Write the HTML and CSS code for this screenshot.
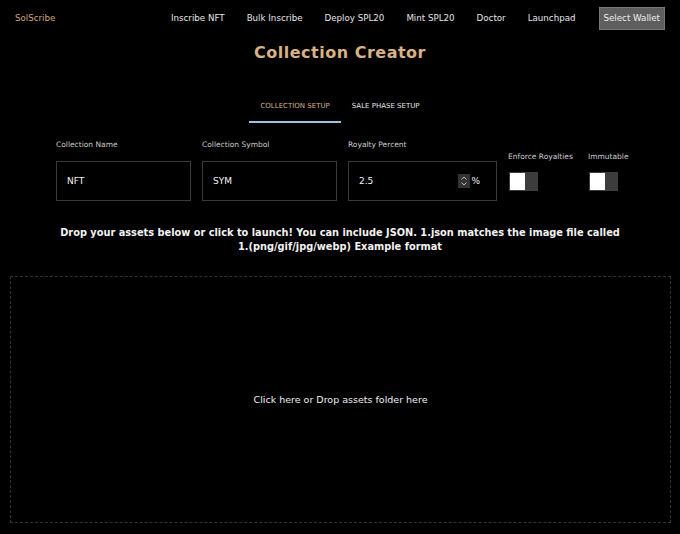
FILE: index.html
```html
<!DOCTYPE html>
<html lang="en">
<head>
    <meta charset="UTF-8">
    <title>SolScribe - Collection Creator</title>
    <link rel="stylesheet" href="styles.css">
</head>
<body>
    <header class="topbar">
        <div class="brand">SolScribe</div>
        <nav class="nav-links">
            <a href="#">Inscribe NFT</a>
            <a href="#">Bulk Inscribe</a>
            <a href="#">Deploy SPL20</a>
            <a href="#">Mint SPL20</a>
            <a href="#">Doctor</a>
            <a href="#">Launchpad</a>
        </nav>
        <button class="wallet-button">Select Wallet</button>
    </header>

    <main>
        <h1 class="page-title">Collection Creator</h1>

        <div class="tabs">
            <div class="tab active">COLLECTION SETUP</div>
            <div class="tab">SALE PHASE SETUP</div>
        </div>

        <div class="form-row">
            <div class="field">
                <label>Collection Name</label>
                <div class="text-box">NFT</div>
            </div>
            <div class="field">
                <label>Collection Symbol</label>
                <div class="text-box">SYM</div>
            </div>
            <div class="field">
                <label>Royalty Percent</label>
                <div class="text-box royalty">
                    <span>2.5</span>
                    <span class="suffix">
                        <span class="spinner">
                            <svg width="8" height="12" viewBox="0 0 8 12">
                                <path d="M1.5 4.5 L4 2 L6.5 4.5 M1.5 7.5 L4 10 L6.5 7.5" fill="none" stroke="#bbb" stroke-width="1"/>
                            </svg>
                        </span>%
                    </span>
                </div>
            </div>
            <div class="field toggle-field enforce">
                <label>Enforce Royalties</label>
                <div class="toggle"><span class="knob"></span></div>
            </div>
            <div class="field toggle-field">
                <label>Immutable</label>
                <div class="toggle"><span class="knob"></span></div>
            </div>
        </div>

        <p class="drop-info">Drop your assets below or click to launch! You can include JSON. 1.json matches the image file called <span class="nowrap">1.(png/gif/jpg/webp)</span> Example format</p>

        <div class="dropzone">Click here or Drop assets folder here</div>
    </main>
</body>
</html>
```

FILE: styles.css
```css
body {
    margin: 0;
    padding: 0;
    background-color: #000;
    color: #e6e6e6;
    font-family: "DejaVu Sans", "Liberation Sans", sans-serif;
}

.topbar {
    display: flex;
    align-items: center;
    height: 36px;
    padding: 0 15px;
}

.brand {
    color: #c9a77c;
    font-size: 8.7px;
}

.nav-links {
    display: flex;
    gap: 22px;
    margin-left: auto;
}

.nav-links a {
    color: #e6e6e6;
    text-decoration: none;
    font-size: 8.7px;
}

.wallet-button {
    margin-left: 23px;
    height: 23px;
    padding: 0 4px;
    background-color: #5e5e5e;
    color: #eee;
    border: 1px solid #777;
    font-family: inherit;
    font-size: 8.7px;
}

main {
    padding: 0 9px;
}

.page-title {
    margin: 7px 0 0;
    text-align: center;
    color: #d9b283;
    font-size: 16px;
    font-weight: bold;
    letter-spacing: 0.5px;
    line-height: 20px;
}

.tabs {
    display: flex;
    justify-content: center;
    margin-top: 34px;
}

.tab {
    padding: 5px 11px 11px;
    font-size: 7px;
    color: #e6e6e6;
}

.tab.active {
    color: #d4b08a;
    border-bottom: 2px solid #9cc3dd;
}

.form-row {
    display: flex;
    align-items: flex-start;
    gap: 11px;
    margin: 17px 0 0 47px;
}

.field label {
    display: block;
    height: 21px;
    font-size: 7.5px;
    color: #ccc;
}

.text-box {
    display: flex;
    align-items: center;
    width: 135px;
    height: 40px;
    padding: 0 10px;
    box-sizing: border-box;
    border: 1px solid #3a3a3a;
    font-size: 9px;
    color: #f2f2f2;
}

.text-box.royalty {
    width: 149px;
    justify-content: space-between;
    padding-right: 16px;
}

.suffix {
    display: flex;
    align-items: center;
}

.spinner {
    display: flex;
    align-items: center;
    justify-content: center;
    width: 12px;
    height: 14px;
    background-color: #333;
    margin-right: 1px;
}

.toggle-field {
    padding-top: 12px;
}

.toggle-field.enforce {
    width: 69px;
}

.toggle-field label {
    height: 20px;
    white-space: nowrap;
}

.toggle {
    width: 29px;
    height: 19px;
    margin-left: 1px;
    background-color: #3c3c3c;
    box-sizing: border-box;
    padding: 1px;
}

.toggle .knob {
    display: block;
    width: 15px;
    height: 17px;
    background-color: #fff;
}

.drop-info {
    margin: 25px 40px 0;
    text-align: center;
    font-size: 9.8px;
    font-weight: bold;
    line-height: 14px;
    color: #f2f2f2;
}

.nowrap {
    white-space: nowrap;
}

.dropzone {
    display: flex;
    align-items: center;
    justify-content: center;
    height: 245px;
    margin: 22px 0 0 1px;
    border: 1px dashed #333;
    font-size: 9.5px;
    color: #eee;
}
```
